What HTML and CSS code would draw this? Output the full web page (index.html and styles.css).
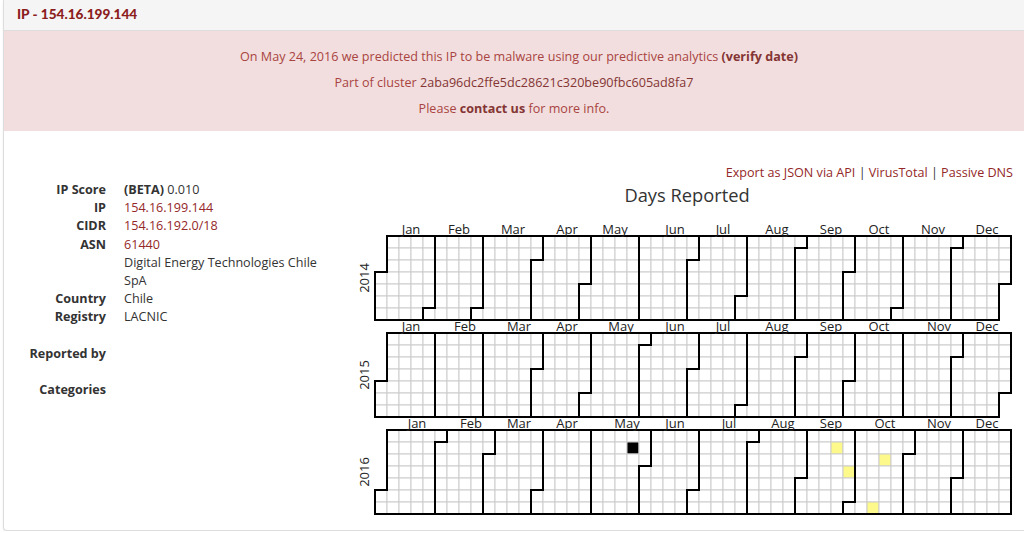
FILE: index.html
```html
<!DOCTYPE html>
<html lang="en">

<head>
    <meta charset="UTF-8">
    <meta name="viewport" content="width=device-width, initial-scale=1.0">
    <title>IP - 154.16.199.144</title>

    <link rel="stylesheet" href="styles.css">
</head>

<body>

    <div class="panel">
        <div class="panel-heading">
            <h1>IP - 154.16.199.144</h1>
        </div>

        <div class="alert">
            <p>On May 24, 2016 we predicted this IP to be malware using our predictive analytics <a href="#"><b>(verify date)</b></a></p>
            <p>Part of cluster <a href="#">2aba96dc2ffe5dc28621c320be90fbc605ad8fa7</a></p>
            <p>Please <a href="#"><b>contact us</b></a> for more info.</p>
        </div>

        <div class="panel-body">
            <div class="col-info">
                <dl class="info">
                    <dt>IP Score</dt>
                    <dd><b>(BETA)</b> 0.010</dd>
                    <dt>IP</dt>
                    <dd><a href="#">154.16.199.144</a></dd>
                    <dt>CIDR</dt>
                    <dd><a href="#">154.16.192.0/18</a></dd>
                    <dt>ASN</dt>
                    <dd><a href="#">61440</a><br>Digital Energy Technologies Chile SpA</dd>
                    <dt>Country</dt>
                    <dd>Chile</dd>
                    <dt>Registry</dt>
                    <dd>LACNIC</dd>
                    <dt class="gap">Reported by</dt>
                    <dd class="gap"></dd>
                    <dt class="gap">Categories</dt>
                    <dd class="gap"></dd>
                </dl>
            </div>

            <div class="col-cal">
                <p class="links">
                    <a href="#">Export as JSON via API</a> | <a href="#">VirusTotal</a> | <a href="#">Passive DNS</a>
                </p>
                <h3>Days Reported</h3>
                <svg id="calendar" width="664" height="310"></svg>
            </div>
        </div>
    </div>

    <script>
        document.addEventListener('DOMContentLoaded', () => {
            const cellSize = 12;
            const ns = 'http://www.w3.org/2000/svg';
            const svg = document.getElementById('calendar');
            const monthNames = ['Jan', 'Feb', 'Mar', 'Apr', 'May', 'Jun', 'Jul', 'Aug', 'Sep', 'Oct', 'Nov', 'Dec'];

            // hari yang dilaporkan
            const reported = {
                '2016-05-23': 'q-high',
                '2016-09-19': 'q-low',
                '2016-09-28': 'q-low',
                '2016-10-15': 'q-low',
                '2016-10-18': 'q-low'
            };

            const el = (name, attrs, parent) => {
                const node = document.createElementNS(ns, name);
                for (const key in attrs) node.setAttribute(key, attrs[key]);
                parent.appendChild(node);
                return node;
            };

            const weekOf = (d) => {
                const start = new Date(d.getFullYear(), 0, 1);
                const days = Math.round((d - start) / 864e5);
                return Math.floor((days + start.getDay()) / 7);
            };

            const pad = (n) => (n < 10 ? '0' : '') + n;

            const monthPath = (year, month) => {
                const t0 = new Date(year, month, 1);
                const t1 = new Date(year, month + 1, 0);
                const d0 = t0.getDay(), w0 = weekOf(t0);
                const d1 = t1.getDay(), w1 = weekOf(t1);
                return 'M' + (w0 + 1) * cellSize + ',' + d0 * cellSize +
                    'H' + w0 * cellSize + 'V' + 7 * cellSize +
                    'H' + w1 * cellSize + 'V' + (d1 + 1) * cellSize +
                    'H' + (w1 + 1) * cellSize + 'V0' +
                    'H' + (w0 + 1) * cellSize + 'Z';
            };

            [2014, 2015, 2016].forEach((year, i) => {
                const g = el('g', { transform: 'translate(20,' + (30 + i * 97) + ')' }, svg);

                const label = el('text', {
                    class: 'year',
                    transform: 'translate(-6,' + cellSize * 3.5 + ')rotate(-90)'
                }, g);
                label.textContent = year;

                for (let d = new Date(year, 0, 1); d.getFullYear() === year; d.setDate(d.getDate() + 1)) {
                    const key = year + '-' + pad(d.getMonth() + 1) + '-' + pad(d.getDate());
                    el('rect', {
                        class: 'day ' + (reported[key] || ''),
                        x: weekOf(d) * cellSize,
                        y: d.getDay() * cellSize,
                        width: cellSize,
                        height: cellSize
                    }, g);
                }

                for (let m = 0; m < 12; m++) {
                    el('path', { class: 'month', d: monthPath(year, m) }, g);

                    const w0 = weekOf(new Date(year, m, 1));
                    const w1 = weekOf(new Date(year, m + 1, 0));
                    const text = el('text', {
                        class: 'month-name',
                        x: (w0 + w1 + 1) / 2 * cellSize + 6,
                        y: -2
                    }, g);
                    text.textContent = monthNames[m];
                }
            });
        });
    </script>

</body>
</html>
```

FILE: styles.css
```css
body {
    margin: 0;
    font-family: "Open Sans", Arial, sans-serif;
    font-size: 12.6px;
    line-height: 18px;
    color: #333;
    background-color: #fff;
}

a {
    color: #942828;
    text-decoration: none;
}

.panel {
    margin-left: 3px;
    border-left: 1px solid #ddd;
    border-bottom: 1px solid #ddd;
    border-radius: 0 0 0 4px;
    box-shadow: 0 1px 2px rgba(0, 0, 0, 0.08);
    background-color: #fff;
}

.panel-heading {
    height: 30px;
    padding: 0 13px;
    background-color: #f5f5f5;
    border-bottom: 1px solid #ddd;
}

.panel-heading h1 {
    margin: 0;
    font-family: Lato, "Open Sans", sans-serif;
    font-size: 13.6px;
    font-weight: 900;
    line-height: 29px;
    color: #8c1d1d;
}

.alert {
    padding: 17px 15px 5px;
    background-color: #f2dede;
    color: #a94442;
    text-align: center;
}

.alert p {
    margin: 0 0 8px;
}

.alert p:first-child {
    padding-left: 10px;
}

.alert a {
    color: #843534;
}

.panel-body {
    display: flex;
    padding: 32px 0 14px;
}

.col-info {
    width: 351px;
    flex-shrink: 0;
}

.info {
    display: grid;
    grid-template-columns: 102px 210px;
    column-gap: 18px;
    margin: 18px 0 0;
    line-height: 18.2px;
}

.info dt {
    font-weight: bold;
    text-align: right;
}

.info dd {
    margin: 0;
}

.info .gap {
    margin-top: 18.2px;
}

.col-cal {
    width: 664px;
    flex-shrink: 0;
}

.links {
    margin: 1px 0 0;
    padding-right: 6px;
    text-align: right;
}

.col-cal h3 {
    margin: 2px 0 0;
    font-size: 18.3px;
    font-weight: normal;
    line-height: 22px;
    text-align: center;
    color: #333;
}

#calendar {
    display: block;
}

#calendar text {
    font-family: "Open Sans", Arial, sans-serif;
    font-size: 13px;
    fill: #222;
    text-anchor: middle;
}

.day {
    fill: #fff;
    stroke: #ccc;
}

.day.q-high {
    fill: #000;
}

.day.q-low {
    fill: #fdf98a;
}

.month {
    fill: none;
    stroke: #000;
    stroke-width: 2px;
}
```
